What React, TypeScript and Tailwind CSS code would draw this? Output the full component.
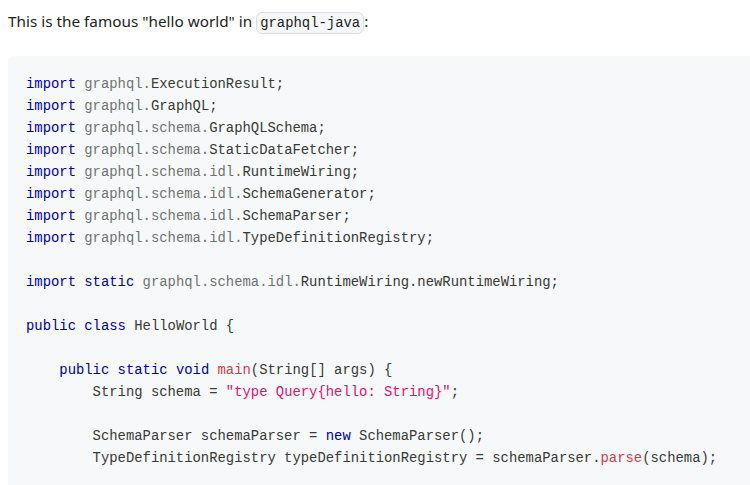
import React from "react";

type Tok = [string, string?];

const kw = "text-[#00009f]";
const ns = "text-[#393a34] opacity-70";
const fn = "text-[#d73a49]";
const str = "text-[#e3116c]";

const imp = (pkg: string, name: string): Tok[] => [
  ["import", kw],
  [" "],
  [pkg, ns],
  [name],
];

const lines: Tok[][] = [
  imp("graphql.", "ExecutionResult;"),
  imp("graphql.", "GraphQL;"),
  imp("graphql.schema.", "GraphQLSchema;"),
  imp("graphql.schema.", "StaticDataFetcher;"),
  imp("graphql.schema.idl.", "RuntimeWiring;"),
  imp("graphql.schema.idl.", "SchemaGenerator;"),
  imp("graphql.schema.idl.", "SchemaParser;"),
  imp("graphql.schema.idl.", "TypeDefinitionRegistry;"),
  [],
  [
    ["import", kw],
    [" "],
    ["static", kw],
    [" "],
    ["graphql.schema.idl.", ns],
    ["RuntimeWiring.newRuntimeWiring;"],
  ],
  [],
  [["public", kw], [" "], ["class", kw], [" HelloWorld {"]],
  [],
  [
    ["    "],
    ["public", kw],
    [" "],
    ["static", kw],
    [" "],
    ["void", kw],
    [" "],
    ["main", fn],
    ["(String[] args) {"],
  ],
  [
    ["        String schema = "],
    ['"type Query{hello: String}"', str],
    [";"],
  ],
  [],
  [
    ["        SchemaParser schemaParser = "],
    ["new", kw],
    [" SchemaParser();"],
  ],
  [
    ["        TypeDefinitionRegistry typeDefinitionRegistry = schemaParser."],
    ["parse", fn],
    ["(schema);"],
  ],
  [],
  [],
];

export default function App() {
  return (
    <div className="w-[750px] h-[485px] overflow-hidden bg-white pl-2 pt-2">
      <p className="font-['Noto_Sans',sans-serif] text-[15.3px] leading-[26.4px] text-[#1c1e21] mb-5">
        This is the famous "hello world" in{" "}
        <code className="font-['Liberation_Mono',monospace] text-[13.88px] bg-[#f6f7f8] border border-[rgba(0,0,0,0.1)] rounded-[6px] px-[3px] py-[2px]">
          graphql-java
        </code>
        :
      </p>
      <pre className="w-[780px] bg-[#f6f8fa] rounded-[6.4px] pt-[17px] pb-4 pl-[18px] pr-4 font-['Liberation_Mono',monospace] text-[13.88px] leading-[22px] text-[#393a34]">
        {lines.map((line, i) => (
          <div key={i} className="h-[22px] whitespace-pre">
            {line.map(([t, c], j) => (
              <span key={j} className={c}>
                {t}
              </span>
            ))}
          </div>
        ))}
      </pre>
    </div>
  );
}
